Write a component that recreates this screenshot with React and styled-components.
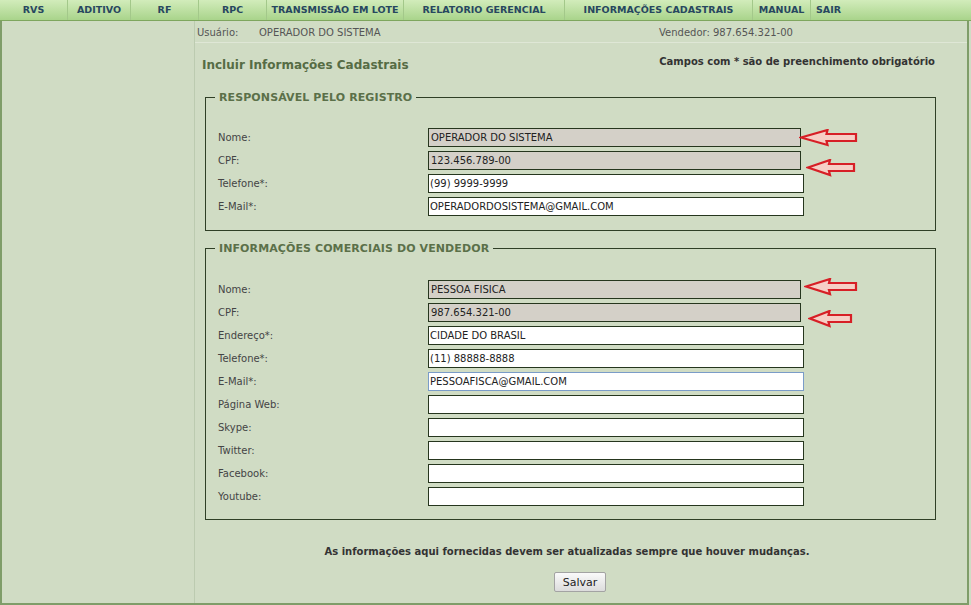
import styled, { createGlobalStyle } from 'styled-components';

const Global = createGlobalStyle`
  html, body {
    margin: 0;
    padding: 0;
    background: #d0dcc4;
  }
  body {
    font-family: "DejaVu Sans", Verdana, sans-serif;
  }
`;

const Page = styled.div`
  width: 971px;
  height: 605px;
  display: flex;
  flex-direction: column;
  background: #d0dcc4;
  overflow: hidden;
`;

const Nav = styled.nav`
  height: 20px;
  display: flex;
  align-items: stretch;
  background: linear-gradient(#d2ecbb, #a9d48b);
  border-bottom: 1px solid #7ea65e;
`;

const NavItem = styled.a`
  width: ${(p) => p.w}px;
  display: flex;
  align-items: center;
  justify-content: ${(p) => (p.left ? 'flex-start' : 'center')};
  padding-left: ${(p) => (p.left ? 5 : 0)}px;
  padding-bottom: 1px;
  box-sizing: border-box;
  border-right: ${(p) => (p.last ? 'none' : '1px solid #a3c88a')};
  font-size: 9.5px;
  font-weight: bold;
  color: #27475f;
  text-decoration: none;
  white-space: nowrap;
`;

const Body = styled.div`
  flex: 1;
  display: flex;
  border-left: 2px solid #7f9d69;
  border-right: 2px solid #7f9d69;
  border-bottom: 2px solid #7f9d69;
  margin-right: 2px;
`;

const Sidebar = styled.aside`
  width: 192px;
  border-right: 1px solid #bccbb0;
`;

const Main = styled.main`
  flex: 1;
  display: flex;
  flex-direction: column;
`;

const InfoRow = styled.div`
  height: 20px;
  display: flex;
  align-items: center;
  border-bottom: 1px solid #dfe7d6;
  font-size: 10px;
  color: #555;
  padding-left: 2px;
  padding-top: 1px;
`;

const InfoLabel = styled.span`
  width: ${(p) => p.w}px;
`;

const InfoValue = styled.span`
  width: ${(p) => p.w || 'auto'}px;
`;

const Head = styled.div`
  display: flex;
  justify-content: space-between;
  align-items: flex-start;
  padding: 13px 32px 0 7px;
  height: 32px;
`;

const Title = styled.h1`
  margin: 2px 0 0;
  font-size: 12px;
  font-weight: bold;
  color: #566c45;
`;

const Note = styled.p`
  margin: 0;
  font-size: 10px;
  font-weight: bold;
  color: #333;
`;

const Fieldset = styled.fieldset`
  margin: ${(p) => p.top}px 31px 0 10px;
  padding: ${(p) => p.pt}px 0 ${(p) => p.bottom}px 12px;
  border: 1px solid #2f3f26;
  display: flex;
  flex-direction: column;
  gap: 4px;
  min-width: 0;
`;

const Legend = styled.legend`
  padding: 0 4px;
  margin-left: -3px;
  font-size: 11px;
  font-weight: bold;
  color: #5b7049;
  letter-spacing: 0.1px;
`;

const Row = styled.div`
  display: flex;
  align-items: center;
  height: 19px;
`;

const Label = styled.label`
  width: 210px;
  font-size: 10px;
  color: #444;
`;

const FieldWrap = styled.div`
  position: relative;
  display: flex;
`;

const Input = styled.input`
  width: ${(p) => (p.readOnly ? 373 : 376)}px;
  height: 19px;
  box-sizing: border-box;
  border: 1px solid ${(p) => (p.focus ? '#7a9cc8' : '#26361e')};
  background: ${(p) => (p.readOnly ? '#d4d0c8' : '#fff')};
  font-family: "DejaVu Sans", Verdana, sans-serif;
  font-size: 10px;
  color: #222;
  padding: 0 ${(p) => (p.readOnly ? 2 : 1)}px;
  outline: none;
`;

const Arrow = styled.svg`
  position: absolute;
  left: ${(p) => p.x}px;
  top: ${(p) => p.y}px;
`;

const Footer = styled.div`
  display: flex;
  flex-direction: column;
  align-items: center;
  padding-top: 26px;
  padding-right: 28px;
  gap: 15px;
`;

const FooterText = styled.p`
  margin: 0;
  font-size: 10px;
  font-weight: bold;
  color: #333;
`;

const Button = styled.button`
  width: 52px;
  height: 20px;
  margin-left: 26px;
  padding: 0;
  font-family: "DejaVu Sans", Verdana, sans-serif;
  font-size: 11px;
  color: #222;
  background: linear-gradient(#fafafa, #dcdcdc);
  border: 1px solid #a3a3a3;
  border-radius: 2px;
`;

const nav = [
  ['RVS', 68],
  ['ADITIVO', 63],
  ['RF', 68],
  ['RPC', 68],
  ['TRANSMISSÃO EM LOTE', 137],
  ['RELATORIO GERENCIAL', 161],
  ['INFORMAÇÕES CADASTRAIS', 188],
  ['MANUAL', 58],
];

// hand-drawn style red arrow pointing at the field
const RedArrow = ({ x, y, w = 57 }) => {
  const h = w * 0.5;
  return (
    <Arrow x={x} y={y} width={w + 2} height={18} viewBox={`0 0 ${w + 2} 18`}>
      <polygon
        points={`2,8.5 ${h},1 ${h - 1},5 ${w},5 ${w},12 ${h - 1},12 ${h},16`}
        fill="#f6cfc6"
        stroke="#d71f26"
        strokeWidth="2.2"
        strokeLinejoin="miter"
      />
    </Arrow>
  );
};

const Field = ({ label, value = '', readOnly, focus, arrow }) => (
  <Row>
    <Label>{label}</Label>
    <FieldWrap>
      <Input defaultValue={value} readOnly={readOnly} focus={focus} />
      {arrow && <RedArrow {...arrow} />}
    </FieldWrap>
  </Row>
);

export default function App() {
  return (
    <Page>
      <Global />
      <Nav>
        {nav.map(([t, w]) => (
          <NavItem key={t} w={w}>
            {t}
          </NavItem>
        ))}
        <NavItem w={60} left last>
          SAIR
        </NavItem>
      </Nav>
      <Body>
        <Sidebar />
        <Main>
          <InfoRow>
            <InfoLabel w={62}>Usuário:</InfoLabel>
            <InfoValue w={400}>OPERADOR DO SISTEMA</InfoValue>
            <InfoValue>Vendedor: 987.654.321-00</InfoValue>
          </InfoRow>
          <Head>
            <Title>Incluir Informações Cadastrais</Title>
            <Note>Campos com * são de preenchimento obrigatório</Note>
          </Head>
          <Fieldset top={3} pt={24} bottom={14}>
            <Legend>RESPONSÁVEL PELO REGISTRO</Legend>
            <Field label="Nome:" value="OPERADOR DO SISTEMA" readOnly arrow={{ x: 371, y: 1 }} />
            <Field label="CPF:" value="123.456.789-00" readOnly arrow={{ x: 378, y: 8, w: 48 }} />
            <Field label="Telefone*:" value="(99) 9999-9999" />
            <Field label="E-Mail*:" value="OPERADORDOSISTEMA@GMAIL.COM" />
          </Fieldset>
          <Fieldset top={11} pt={25} bottom={13}>
            <Legend>INFORMAÇÕES COMERCIAIS DO VENDEDOR</Legend>
            <Field label="Nome:" value="PESSOA FISICA" readOnly arrow={{ x: 376, y: -2, w: 52 }} />
            <Field label="CPF:" value="987.654.321-00" readOnly arrow={{ x: 380, y: 7, w: 43 }} />
            <Field label="Endereço*:" value="CIDADE DO BRASIL" />
            <Field label="Telefone*:" value="(11) 88888-8888" />
            <Field label="E-Mail*:" value="PESSOAFISCA@GMAIL.COM" focus />
            <Field label="Página Web:" />
            <Field label="Skype:" />
            <Field label="Twitter:" />
            <Field label="Facebook:" />
            <Field label="Youtube:" />
          </Fieldset>
          <Footer>
            <FooterText>
              As informações aqui fornecidas devem ser atualizadas sempre que houver mudanças.
            </FooterText>
            <Button>Salvar</Button>
          </Footer>
        </Main>
      </Body>
    </Page>
  );
}
